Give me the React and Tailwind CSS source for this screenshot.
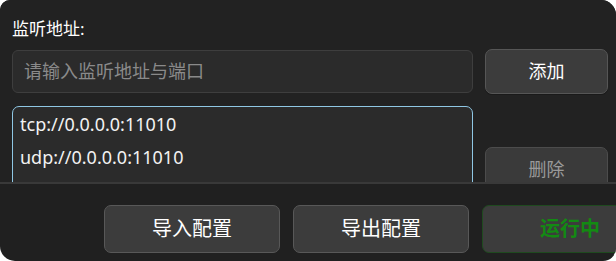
import React from "react";

const F = { fontFamily: '"Noto Sans", "Noto Sans CJK SC", sans-serif' };

export default function App() {
  return (
    <div className="w-[616px] h-[261px] bg-white overflow-hidden" style={F}>
      <div className="w-[616px] h-[261px] bg-[#202020] rounded-tl-[10px] rounded-tr-[15px] rounded-bl-[15px] rounded-br-[13px] overflow-hidden flex flex-col">
        <div className="h-[182px] overflow-hidden pl-[12px] pt-[17px] bg-[#222222]">
          <div className="text-[17px] leading-[24px] text-white h-[24px]">监听地址:</div>
          <div className="flex gap-[12px] mt-[9px]">
            <div className="w-[461px] shrink-0 h-[43px] rounded-[6px] bg-[#2b2b2b] border border-[#3e3e3e] flex items-center px-[11px] text-[18px] text-[#8a8a8a]">
              请输入监听地址与端口
            </div>
            <button className="w-[123px] shrink-0 h-[45px] -mt-[1px] rounded-[7px] bg-[#3c3c3c] border border-[#565656] text-white text-[18px] shadow-[0_1px_0_#1a1a1a]">
              添加
            </button>
          </div>
          <div className="flex gap-[12px] mt-[12px]">
            <div className="w-[461px] shrink-0 h-[110px] rounded-[7px] bg-[#2b2b2b] border-[1.5px] border-[#8fc7e4] px-[7px] pt-[1px] text-[18px] text-[#f2f2f2]">
              <div className="h-[33px] leading-[33px]">tcp://0.0.0.0:11010</div>
              <div className="h-[33px] leading-[33px]">udp://0.0.0.0:11010</div>
            </div>
            <div className="flex flex-col pt-[41px]">
              <button className="w-[123px] shrink-0 h-[45px] rounded-[7px] bg-[#3a3a3a] border border-[#4c4c4c] text-[#9a9a9a] text-[18px]">
                删除
              </button>
            </div>
          </div>
        </div>
        <div className="h-[2px] bg-[#393939]" />
        <div className="flex-1 flex gap-[13px] pl-[104px] pt-[21px]">
          <button className="w-[176px] h-[48px] shrink-0 rounded-[7px] bg-[#3c3c3c] border border-[#585858] text-white text-[20px]">
            导入配置
          </button>
          <button className="w-[176px] h-[48px] shrink-0 rounded-[7px] bg-[#3c3c3c] border border-[#585858] text-white text-[20px]">
            导出配置
          </button>
          <button className="w-[176px] h-[48px] shrink-0 rounded-[7px] bg-[#3c3c3c] border border-[#1f4a1f] text-[#138a13] font-bold text-[20px]">
            运行中
          </button>
        </div>
      </div>
    </div>
  );
}
